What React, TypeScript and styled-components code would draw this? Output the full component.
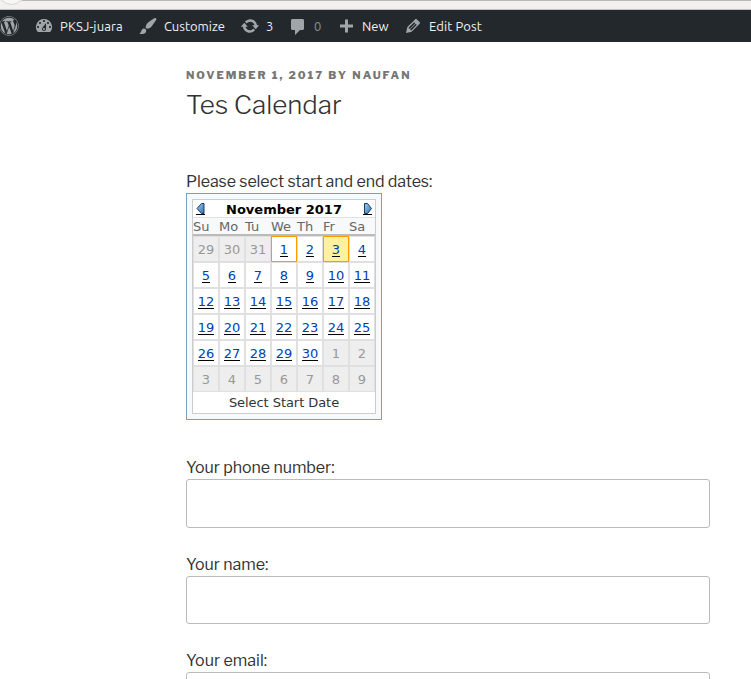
import React from 'react';
import styled, { createGlobalStyle } from 'styled-components';
import { FaWordpress } from 'react-icons/fa';

const GlobalStyle = createGlobalStyle`
  * { box-sizing: border-box; }
  html, body { margin: 0; padding: 0; background: #fff; overflow: hidden; }
`;

const Page = styled.div`
  height: 679px;
  overflow: hidden;
  color: #333;
  font-family: "Libre Franklin", Inter, "Liberation Sans", sans-serif;
`;

const BrowserEdge = styled.div`
  height: 10px;
  overflow: hidden;
  background: #f2f1f0;
  border-bottom: 1px solid #c3c0bd;
  svg { display: block; }
`;

const AdminBar = styled.nav`
  height: 32px;
  display: flex;
  background: #23282d;
  color: #eee;
  font: 13px/32px Ubuntu, "Noto Sans", sans-serif;
`;

const BarItem = styled.div<{ $width: number; $spacing?: number; $dim?: boolean }>`
  width: ${p => p.$width}px;
  flex: none;
  display: flex;
  align-items: center;
  gap: 6px;
  white-space: nowrap;
  letter-spacing: ${p => p.$spacing ?? 0}px;
  color: ${p => (p.$dim ? '#8b8f92' : '#f1f1f1')};
`;

const BarIcon = styled.svg<{ $drop?: number }>`
  width: 20px;
  height: 20px;
  flex: none;
  fill: #a0a5aa;
  margin-top: ${p => p.$drop ?? 0}px;
`;

const SiteLogo = styled(FaWordpress)`
  width: 20px;
  height: 20px;
  flex: none;
  margin-left: -1px;
  color: #a0a5aa;
`;

const Article = styled.main`
  width: 524px;
  margin-left: 186px;
  padding-top: 26px;
`;

const Meta = styled.div`
  height: 15px;
  font-size: 11px;
  line-height: 15px;
  font-weight: 800;
  letter-spacing: 1.96px;
  color: #767676;
  text-transform: uppercase;
  white-space: nowrap;
`;

const Title = styled.h1`
  margin: 4px 0 0;
  height: 36px;
  font-size: 26px;
  line-height: 36px;
  font-weight: 300;
  color: #333;
`;

const Label = styled.label<{ $top: number; $spacing: number }>`
  display: block;
  height: 24px;
  margin: ${p => p.$top}px 0 0;
  font-size: 16px;
  line-height: 26px;
  letter-spacing: ${p => p.$spacing}px;
  white-space: nowrap;
`;

const Field = styled.input<{ $height: number }>`
  display: block;
  width: 524px;
  height: ${p => p.$height}px;
  border: 1px solid #bbb;
  border-radius: 3px;
  background: #fff;
  padding: 11px;
  outline: none;
`;

const Calendar = styled.section`
  width: 196px;
  height: 227px;
  padding: 5px;
  border: 1px solid #7b9ebd;
  background: #f7f9fb;
  font-family: "DejaVu Sans", sans-serif;
  font-size: 13px;
`;

const CalendarFrame = styled.div`
  height: 215px;
  border: 1px solid #ccc;
  background: #f7f9fb;
`;

const MonthBar = styled.header`
  height: 18px;
  display: flex;
  align-items: flex-start;
  justify-content: space-between;
  padding: 0 2px;
  background: #fff;
  border-bottom: 1px solid #e0e0e0;
  svg { display: block; margin-top: 3px; }
`;

const Month = styled.div`
  font-weight: bold;
  line-height: 20px;
  color: #000;
`;

const Weekdays = styled.div`
  height: 18px;
  display: grid;
  grid-template-columns: repeat(7, 26px);
  border-bottom: 2px solid #bbb;
  line-height: 17px;
  color: #666;
`;

const Days = styled.div`
  display: grid;
  grid-template-columns: repeat(7, 26px);
  grid-auto-rows: 26px;
`;

type Kind = 'out' | 'day' | 'start' | 'today';

const Day = styled.div<{ $kind: Kind }>`
  display: flex;
  align-items: flex-start;
  justify-content: center;
  padding-top: 5px;
  border: 1px solid ${p => (p.$kind === 'today' || p.$kind === 'start' ? '#f90' : '#e0e0e0')};
  background: ${p => (p.$kind === 'out' ? '#eee' : p.$kind === 'today' ? '#fff19f' : '#fff')};
  color: ${p => (p.$kind === 'out' ? '#999' : '#003db8')};
  span {
    height: 15px;
    line-height: 15px;
    border-bottom: ${p => (p.$kind === 'out' ? '0' : '1px solid #000')};
  }
`;

const Hint = styled.footer`
  height: 21px;
  line-height: 21px;
  letter-spacing: -0.06px;
  text-align: center;
  background: #fff;
  color: #333;
`;

const icons = {
  dashboard: 'M3.76 16h12.48A7.998 7.998 0 0 0 10 3a7.998 7.998 0 0 0-6.24 13zM10 4c.55 0 1 .45 1 1s-.45 1-1 1-1-.45-1-1 .45-1 1-1zM6 6c.55 0 1 .45 1 1s-.45 1-1 1-1-.45-1-1 .45-1 1-1zm8 0c.55 0 1 .45 1 1s-.45 1-1 1-1-.45-1-1 .45-1 1-1zm-5.37 5.55L12 7v6c0 1.1-.9 2-2 2s-2-.9-2-2c0-.57.24-1.08.63-1.45zM4 10c.55 0 1 .45 1 1s-.45 1-1 1-1-.45-1-1 .45-1 1-1zm12 0c.55 0 1 .45 1 1s-.45 1-1 1-1-.45-1-1 .45-1 1-1zm-5 3c0-.55-.45-1-1-1s-1 .45-1 1 .45 1 1 1 1-.45 1-1z',
  brush: 'M18.33 3.57s.27-.8-.31-1.36c-.53-.52-1.22-.24-1.22-.24-.61.3-5.76 3.47-7.67 5.57-.86.96-2.06 3.79-1.09 4.82.92.98 3.96-.17 4.79-1 2.06-2.06 5.21-7.17 5.5-7.79zM1.4 17.65c2.37-1.56 1.46-3.41 3.23-4.64.93-.65 2.22-.62 3.08.29.63.67.8 2.57-.16 3.46-1.57 1.45-4 1.55-6.15.89z',
  update: 'M10.2 3.28c3.53 0 6.43 2.61 6.92 6h2.08l-3.5 4-3.5-4h2.32c-.45-1.97-2.21-3.45-4.32-3.45-1.45 0-2.73.71-3.54 1.78L4.95 5.66C6.23 4.2 8.11 3.28 10.2 3.28zm-.4 13.44c-3.52 0-6.43-2.61-6.92-6H.8l3.5-4c1.17 1.33 2.33 2.67 3.5 4H5.48c.45 1.97 2.21 3.45 4.32 3.45 1.45 0 2.73-.71 3.54-1.78l1.71 1.95c-1.28 1.46-3.15 2.38-5.25 2.38z',
  comment: 'M4.5 2h10c.8 0 1.5.7 1.5 1.5v8c0 .8-.7 1.5-1.5 1.5H12l-5 5v-5H4.5C3.7 13 3 12.3 3 11.5v-8C3 2.7 3.7 2 4.5 2z',
  plus: 'M17 8.5v3h-5v5H9v-5H4v-3h5v-5h3v5z',
  edit: 'M13.89 3.39l2.71 2.72c.46.46.42 1.24.03 1.64l-8.01 8.02-5.56 1.16 1.16-5.58s7.6-7.63 7.99-8.03c.39-.39 1.22-.39 1.68.07zm-2.73 2.79l-5.59 5.61 1.11 1.11 5.54-5.65zm-2.97 8.23l5.58-5.6-1.07-1.08-5.59 5.6z',
};

const Icon = ({ name, drop }: { name: keyof typeof icons; drop?: number }) => (
  <BarIcon viewBox="0 0 20 20" $drop={drop}><path fillRule="evenodd" d={icons[name]} /></BarIcon>
);

const MonthArrow = ({ next }: { next?: boolean }) => (
  <svg width="10" height="13" viewBox="0 0 10 13">
    <defs>
      <linearGradient id={next ? 'next' : 'prev'} x1="0" x2="1" y1="0" y2="1">
        <stop stopColor="#a5cbed" /><stop offset="1" stopColor="#2f73b0" />
      </linearGradient>
    </defs>
    <path
      d={next ? 'M1.5 .5H4.5L8.5 5.5L4.5 10.5H1.5Z' : 'M9 .5H6.5L2 5.5L6.5 10.5H9Z'}
      fill={`url(#${next ? 'next' : 'prev'})`}
      stroke="#123c68"
    />
    <path d={next ? 'M0 11.5H9' : 'M1 11.5H10'} stroke="#000" />
  </svg>
);

const kindOf = (index: number): Kind => {
  if (index < 3 || index > 32) return 'out';
  if (index === 3) return 'start';
  return index === 5 ? 'today' : 'day';
};
const numberOf = (index: number) => (index < 3 ? 29 + index : index > 32 ? index - 32 : index - 2);

export default function App() {
  return (
    <Page>
      <GlobalStyle />
      <BrowserEdge>
        <svg width="751" height="9">
          <path d="M22 .5H751" stroke="#bbb8b5" />
          <circle cx="11.5" cy="-9" r="13.5" fill="#f7f6f5" stroke="#d5d2cf" />
        </svg>
      </BrowserEdge>
      <AdminBar>
        <BarItem $width={34}><SiteLogo /></BarItem>
        <BarItem $width={104} $spacing={0.14}><Icon name="dashboard" />PKSJ-juara</BarItem>
        <BarItem $width={102}><Icon name="brush" />Customize</BarItem>
        <BarItem $width={48}><Icon name="update" />3</BarItem>
        <BarItem $width={48} $dim><Icon name="comment" drop={2} />0</BarItem>
        <BarItem $width={67}><Icon name="plus" />New</BarItem>
        <BarItem $width={90} $spacing={0.1}><Icon name="edit" />Edit Post</BarItem>
      </AdminBar>
      <Article>
        <Meta>November 1, 2017 by naufan</Meta>
        <Title>Tes Calendar</Title>
        <Label as="p" $top={46} $spacing={-0.08}>Please select start and end dates:</Label>
        <Calendar>
          <CalendarFrame>
            <MonthBar><MonthArrow /><Month>November 2017</Month><MonthArrow next /></MonthBar>
            <Weekdays>{['Su', 'Mo', 'Tu', 'We', 'Th', 'Fr', 'Sa'].map(d => <span key={d}>{d}</span>)}</Weekdays>
            <Days>
              {Array.from({ length: 42 }, (_, i) => (
                <Day key={i} $kind={kindOf(i)}><span>{numberOf(i)}</span></Day>
              ))}
            </Days>
            <Hint>Select Start Date</Hint>
          </CalendarFrame>
        </Calendar>
        <Label htmlFor="phone" $top={35} $spacing={-0.06}>Your phone number:</Label>
        <Field id="phone" $height={49} />
        <Label htmlFor="name" $top={24} $spacing={-0.04}>Your name:</Label>
        <Field id="name" $height={48} />
        <Label htmlFor="email" $top={24} $spacing={0}>Your email:</Label>
        <Field id="email" $height={48} />
      </Article>
    </Page>
  );
}
